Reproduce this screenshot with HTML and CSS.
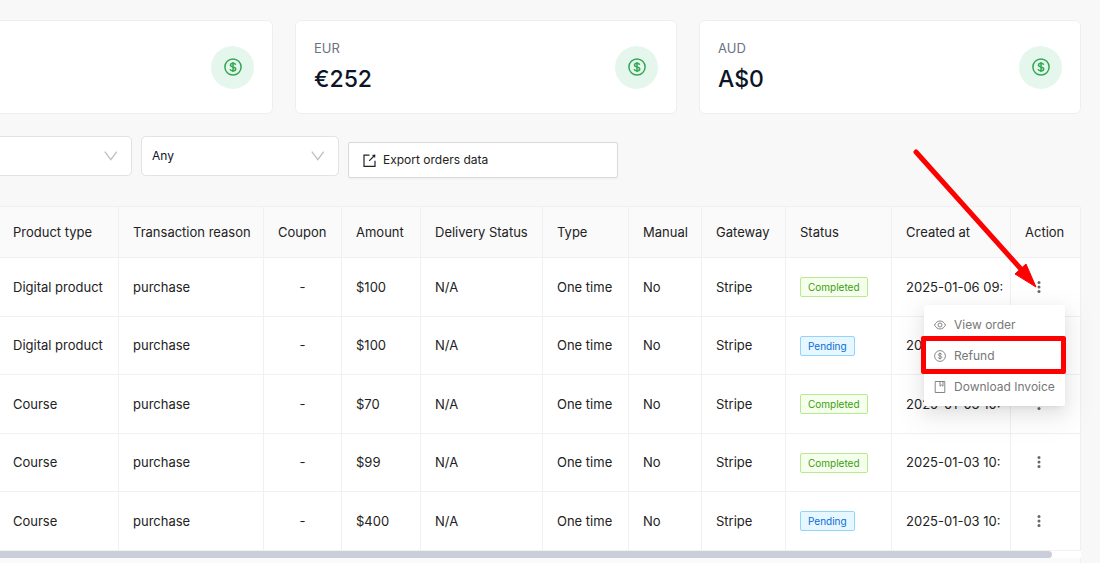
FILE: index.html
```html
<!DOCTYPE html>
<html lang="en">
<head>
<meta charset="utf-8">
<title>Orders</title>
<link rel="stylesheet" href="styles.css">
</head>
<body>
<svg class="sprite" aria-hidden="true">
  <symbol id="dollar" viewBox="0 0 18 18">
    <circle cx="9" cy="9" r="8.1" fill="none" stroke="currentColor" stroke-width="var(--ring, 1.3)"/>
    <path d="M11.6 6.9C11.4 5.8 10.4 5.2 9 5.2C7.5 5.2 6.5 5.9 6.5 7C6.5 8.2 7.5 8.6 9 8.9C10.6 9.2 11.7 9.7 11.7 11C11.7 12.1 10.6 12.9 9 12.9C7.4 12.9 6.4 12.2 6.2 11M9 3.9V14.1" fill="none" stroke="currentColor" stroke-width="var(--ring, 1.3)"/>
  </symbol>
  <symbol id="chevron" viewBox="0 0 14 10">
    <path d="M0.8 0.6L6.8 8.6L12.8 0.6" fill="none" stroke="currentColor" stroke-width="1.3"/>
  </symbol>
  <symbol id="dots" viewBox="0 0 4 12">
    <circle cx="2" cy="1.6" r="1.5" fill="currentColor"/><circle cx="2" cy="6" r="1.5" fill="currentColor"/><circle cx="2" cy="10.4" r="1.5" fill="currentColor"/>
  </symbol>
</svg>
<main class="page">
  <section class="cards">
    <article class="card card-cut"><span class="badge"><svg><use href="#dollar"/></svg></span></article>
    <article class="card">
      <div><p class="currency">EUR</p><p class="total">€252</p></div>
      <span class="badge"><svg><use href="#dollar"/></svg></span>
    </article>
    <article class="card">
      <div><p class="currency">AUD</p><p class="total">A$0</p></div>
      <span class="badge"><svg><use href="#dollar"/></svg></span>
    </article>
  </section>

  <section class="filters">
    <div class="select select-cut"><select aria-label="Filter"><option></option></select><svg><use href="#chevron"/></svg></div>
    <div class="select"><select aria-label="Status"><option>Any</option></select><svg><use href="#chevron"/></svg></div>
    <button class="export" type="button">
      <svg viewBox="0 0 13 13"><path d="M6.5 1.2H1V12.3H12V6.8" fill="none" stroke="currentColor" stroke-width="1.2"/><path d="M6.2 6.8L11 2" fill="none" stroke="currentColor" stroke-width="1.1"/><path d="M8.9 0.9L12.4 0.6L12.1 4.1Z" fill="currentColor"/></svg>
      Export orders data
    </button>
  </section>

  <table class="orders">
    <colgroup><col class="c-product"><col class="c-reason"><col class="c-coupon"><col class="c-amount"><col class="c-delivery"><col class="c-type"><col class="c-manual"><col class="c-gateway"><col class="c-status"><col class="c-created"><col class="c-action"></colgroup>
    <thead>
      <tr><th>Product type</th><th>Transaction reason</th><th>Coupon</th><th>Amount</th><th>Delivery Status</th><th>Type</th><th>Manual</th><th>Gateway</th><th>Status</th><th>Created at</th><th>Action</th></tr>
    </thead>
    <tbody>
      <tr><td>Digital product</td><td>purchase</td><td class="center">-</td><td>$100</td><td>N/A</td><td>One time</td><td>No</td><td>Stripe</td><td><span class="tag done">Completed</span></td><td>2025-01-06 09:</td>
        <td class="action open"><button class="more" type="button" aria-label="Actions"><svg><use href="#dots"/></svg></button>
          <div class="menu" role="menu">
            <button type="button" role="menuitem"><svg viewBox="0 0 12 12"><path d="M0.5 6C3 0.7 9 0.7 11.5 6C9 11.3 3 11.3 0.5 6Z" fill="none" stroke="currentColor" stroke-width="0.9"/><circle cx="6" cy="6" r="2" fill="none" stroke="currentColor" stroke-width="0.9"/></svg>View order</button>
            <button class="marked" type="button" role="menuitem"><svg><use href="#dollar"/></svg>Refund</button>
            <button type="button" role="menuitem"><svg viewBox="0 0 12 12"><path d="M1.2 0.5H10.8V11.5H1.2ZM6 0.5V5.2L7.5 4L9 5.2V0.5" fill="none" stroke="currentColor" stroke-width="0.9"/></svg>Download Invoice</button>
          </div>
          <svg class="arrow" viewBox="0 0 126 142" aria-hidden="true"><path d="M4 4L108 120" stroke="#fe0000" stroke-width="5" stroke-linecap="round"/><path d="M124 139L103 126L114 116Z" fill="#fe0000" stroke="#fe0000" stroke-linejoin="round"/></svg>
        </td></tr>
      <tr><td>Digital product</td><td>purchase</td><td class="center">-</td><td>$100</td><td>N/A</td><td>One time</td><td>No</td><td>Stripe</td><td><span class="tag wait">Pending</span></td><td>2025-01-06 09:</td><td class="action"><button class="more" type="button" aria-label="Actions"><svg><use href="#dots"/></svg></button></td></tr>
      <tr><td>Course</td><td>purchase</td><td class="center">-</td><td>$70</td><td>N/A</td><td>One time</td><td>No</td><td>Stripe</td><td><span class="tag done">Completed</span></td><td>2025-01-03 10:</td><td class="action"><button class="more" type="button" aria-label="Actions"><svg><use href="#dots"/></svg></button></td></tr>
      <tr><td>Course</td><td>purchase</td><td class="center">-</td><td>$99</td><td>N/A</td><td>One time</td><td>No</td><td>Stripe</td><td><span class="tag done">Completed</span></td><td>2025-01-03 10:</td><td class="action"><button class="more" type="button" aria-label="Actions"><svg><use href="#dots"/></svg></button></td></tr>
      <tr><td>Course</td><td>purchase</td><td class="center">-</td><td>$400</td><td>N/A</td><td>One time</td><td>No</td><td>Stripe</td><td><span class="tag wait">Pending</span></td><td>2025-01-03 10:</td><td class="action"><button class="more" type="button" aria-label="Actions"><svg><use href="#dots"/></svg></button></td></tr>
    </tbody>
  </table>
  <div class="scroll"><div class="thumb"></div></div>
  <div class="foot"></div>
</main>
</body>
</html>
```
FILE: styles.css
```css
* { box-sizing: border-box; }
body {
  margin: 0;
  background: #f8f8f8;
  color: #222;
  font-family: Inter, "Liberation Sans", sans-serif;
  font-size: 13px;
  line-height: 20px;
}
p { margin: 0; }
button, select { font: inherit; color: inherit; }
svg { display: block; flex: none; }
.sprite { position: absolute; width: 0; height: 0; }
.page { padding: 20px 19px 0 0; }

.cards { display: grid; grid-template-columns: 273fr 382fr 382fr; gap: 22px; }
.card {
  display: flex;
  align-items: center;
  justify-content: space-between;
  min-height: 94px;
  padding: 16px 18px;
  background: #fff;
  border: 1px solid #eceff2;
  border-radius: 6px;
}
.card-cut { justify-content: flex-end; border-left: 0; border-radius: 0 6px 6px 0; }
.currency { color: #6b7280; }
.total { color: #0c1527; font-size: 23px; font-weight: 500; line-height: 32px; padding: 5px 0 1px; }
.badge {
  display: flex;
  align-items: center;
  justify-content: center;
  width: 43px;
  height: 43px;
  border-radius: 50%;
  background: #e5f7ed;
  color: #34a853;
  --ring: 1.5;
}
.badge svg { width: 18px; height: 18px; }

.filters { display: flex; align-items: flex-start; gap: 9px; padding: 22px 0 28px; }
.select { position: relative; width: 198px; color: #0c1527; font-size: 12px; }
.select-cut { width: 132px; }
.select select {
  display: block;
  width: 100%;
  height: 40px;
  padding: 0 10px;
  appearance: none;
  background: #fff;
  border: 1px solid #e2e2e2;
  border-radius: 5px;
}
.select-cut select { border-left: 0; border-radius: 0 5px 5px 0; }
.select svg { position: absolute; right: 14px; top: 15px; width: 14px; height: 10px; color: #bfbfbf; pointer-events: none; }
.export {
  display: flex;
  align-items: center;
  gap: 7px;
  width: 270px;
  height: 36px;
  margin-top: 6px;
  padding: 0 14px;
  background: #fff;
  border: 1px solid #d9d9d9;
  border-radius: 2px;
  box-shadow: 0 2px 0 rgba(0, 0, 0, 0.02);
  font-size: 12px;
}
.export svg { width: 13px; height: 13px; }

.orders { width: 100%; table-layout: fixed; border-spacing: 0; border-top: 1px solid #f0f0f0; border-radius: 0 2px 0 0; }
.orders th, .orders td {
  padding: 0 0 0 14px;
  text-align: left;
  font-weight: 400;
  white-space: nowrap;
  overflow: hidden;
  background: #fff;
  border-right: 1px solid #f0f0f0;
  border-bottom: 1px solid #f0f0f0;
}
.orders th { height: 51px; background: #fafafa; }
.orders td { height: 59px; padding-bottom: 1px; }
.orders tr:nth-child(even) td { height: 58px; }
.orders th:first-child, .orders td:first-child { padding-left: 13px; }
.orders .center { padding-left: 0; text-align: center; }
.c-product { width: 119px; }
.c-reason { width: 145px; }
.c-coupon { width: 78px; }
.c-amount { width: 79px; }
.c-delivery { width: 122px; }
.c-type { width: 86px; }
.c-manual { width: 73px; }
.c-gateway { width: 84px; }
.c-status { width: 106px; }
.c-created { width: 119px; }
.c-action { width: 70px; }

.tag {
  display: inline-block;
  padding: 0 7px;
  border: 1px solid;
  border-radius: 2px;
  font-size: 10px;
  line-height: 18px;
  vertical-align: middle;
}
.done { color: #389e0d; background: #f6ffed; border-color: #b7eb8f; }
.wait { color: #096dd9; background: #e6f7ff; border-color: #91d5ff; }

.more { display: block; padding: 0 12px; border: 0; background: none; color: #666; }
.more svg { width: 4px; height: 12px; }
.orders .open { position: relative; overflow: visible; }
.menu {
  position: absolute;
  z-index: 1;
  top: 47px;
  right: 15px;
  width: 141px;
  padding: 4px 0;
  background: #fff;
  border-radius: 2px;
  box-shadow: 0 3px 6px -4px rgba(0, 0, 0, 0.12), 0 6px 16px rgba(0, 0, 0, 0.08), 0 9px 28px 8px rgba(0, 0, 0, 0.05);
}
.menu button {
  position: relative;
  display: flex;
  align-items: center;
  gap: 8px;
  width: 100%;
  height: 31px;
  padding: 0 10px;
  border: 0;
  background: none;
  color: #777;
  font-size: 12px;
}
.menu svg { width: 12px; height: 12px; }
.marked::after {
  content: "";
  position: absolute;
  inset: -4px -1px -3px -3px;
  border: 5px solid #fe0000;
  border-radius: 2px;
}
.arrow { position: absolute; z-index: 2; top: -110px; right: 42px; width: 126px; height: 142px; pointer-events: none; }

.scroll { height: 7px; background: #fff; }
.thumb { width: 97.3%; height: 100%; background: #c9ced8; border-radius: 0 4px 4px 0; }
.foot { height: 5px; background: #fafafa; border-right: 1px solid #f0f0f0; }
```
